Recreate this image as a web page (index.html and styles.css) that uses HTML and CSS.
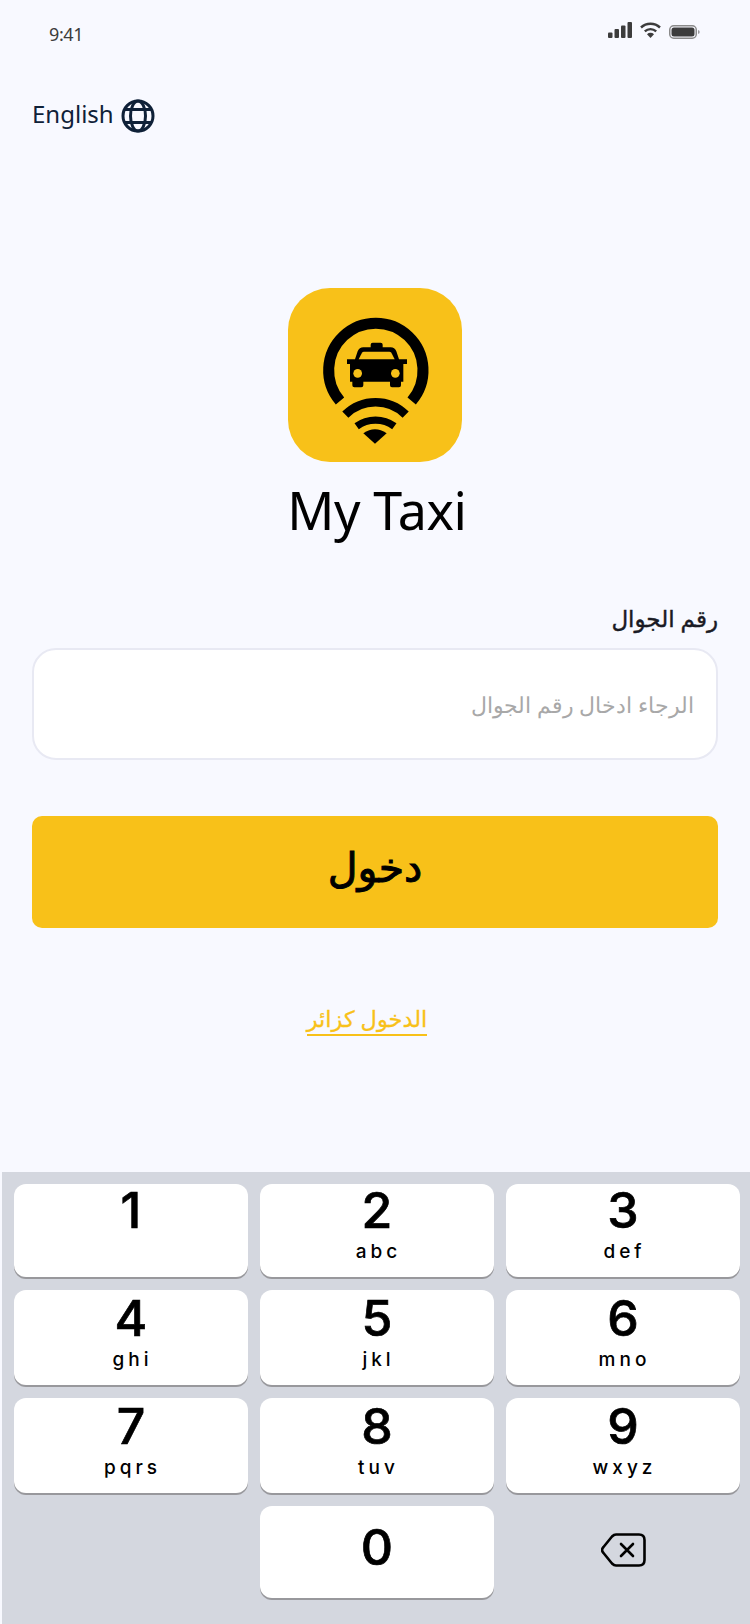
FILE: index.html
```html
<!DOCTYPE html>
<html lang="ar">
  <head>
    <meta charset="UTF-8" />
    <meta name="viewport" content="width=device-width, initial-scale=1.0" />
    <title>My Taxi</title>
    <link rel="stylesheet" href="styles.css">
  </head>

  <body>
    <div class="page">
      <div class="status-bar">
        <span class="time">9:41</span>
        <div class="status-icons">
          <svg width="24" height="16" viewBox="0 0 24 16">
            <rect x="0" y="10.500" width="4.500" height="5.500" rx="1" />
            <rect x="6.500" y="7" width="4.500" height="9" rx="1" />
            <rect x="13" y="3.500" width="4.500" height="12.500" rx="1" />
            <rect x="19.500" y="0" width="4.500" height="16" rx="1" />
          </svg>
          <svg width="21" height="16" viewBox="0 0 21 16">
            <path d="M1 5.500a14 14 0 0 1 19 0" fill="none" stroke="#3c3c3c" stroke-width="2.400" />
            <path d="M4.800 9.300a8.500 8.500 0 0 1 11.400 0" fill="none" stroke="#3c3c3c" stroke-width="2.400" />
            <path d="M7 12.200a5 5 0 0 1 7 0L10.500 16z" />
          </svg>
          <svg class="battery" width="31" height="14" viewBox="0 0 31 14">
            <rect x="0.750" y="0.750" width="26.500" height="12.500" rx="4" fill="none" stroke="#8a8a8a" stroke-width="1.500" />
            <rect x="2.500" y="2.500" width="23" height="9" rx="2.500" />
            <path d="M29.500 5c1.200.5 1.200 3.500 0 4z" />
          </svg>
        </div>
      </div>

      <div class="lang">
        <span>English</span>
        <svg width="34" height="34" viewBox="0 0 34 34" fill="none" stroke="#0f2138" stroke-width="3">
          <circle cx="17" cy="17" r="15" />
          <ellipse cx="17" cy="17" rx="7.500" ry="15" />
          <path d="M4 10.500h26M4 23.500h26" />
        </svg>
      </div>

      <div class="brand">
        <div class="logo">
          <svg width="174" height="174" viewBox="54 54 522 522">
            <path d="M210 393A141.500 141.500 0 1 1 425 393" fill="none" stroke="#000" stroke-width="33" />
            <path d="M226 434A128 128 0 0 1 407 434" fill="none" stroke="#000" stroke-width="26" />
            <path d="M260 469A96 96 0 0 1 373 469" fill="none" stroke="#000" stroke-width="22" />
            <path d="M280 490Q315 466 350 490L315 521Z" />
            <path d="M302 232V224Q302 218 308 218H332Q338 218 338 224V232H362Q374 232 379 244L387 268H411V282H400V335H393V346Q393 352 387 352H366Q360 352 360 346V335H280V346Q280 352 274 352H253Q247 352 247 346V335H240V282H231V268H255L263 244Q268 232 280 232Z" />
            <path d="M266 268L276 248Q278 245 282 245H358Q362 245 364 248L374 268Z" fill="#f8c119" />
            <circle cx="263" cy="310" r="13" fill="#f8c119" />
            <circle cx="376" cy="310" r="13" fill="#f8c119" />
          </svg>
        </div>
        <h1>My Taxi</h1>
      </div>

      <form class="login-form" dir="rtl">
        <label for="phone">رقم الجوال</label>
        <input type="tel" id="phone" dir="rtl" placeholder="الرجاء ادخال رقم الجوال" />
        <button type="button">دخول</button>
        <a href="#" class="guest">الدخول كزائر</a>
      </form>

      <div class="keyboard">
        <div class="key"><b>1</b></div>
        <div class="key"><b>2</b><small>abc</small></div>
        <div class="key"><b>3</b><small>def</small></div>
        <div class="key key-low"><b>4</b><small>ghi</small></div>
        <div class="key key-low"><b>5</b><small>jkl</small></div>
        <div class="key key-low"><b>6</b><small>mno</small></div>
        <div class="key key-low"><b>7</b><small>pqrs</small></div>
        <div class="key key-low"><b>8</b><small>tuv</small></div>
        <div class="key key-low"><b>9</b><small>wxyz</small></div>
        <div class="key-empty"></div>
        <div class="key key-zero"><b>0</b></div>
        <div class="key-empty">
          <svg width="45" height="34" viewBox="0 0 45 34" fill="none" stroke="#000" stroke-width="2.600" stroke-linejoin="round" stroke-linecap="round">
            <path d="M15 1.500h23q5.500 0 5.500 5.500v20q0 5.500-5.500 5.500H15q-2 0-4-2L2.500 20q-3-3 0-6L11 3.500q2-2 4-2z" />
            <path d="M20 11l12 12M32 11L20 23" />
          </svg>
        </div>
      </div>
    </div>
  </body>
</html>
```

FILE: styles.css
```css
* {
  box-sizing: border-box;
}

body {
  margin: 0;
  padding: 0;
  font-family: "Noto Sans", "DejaVu Sans", sans-serif;
  background-color: #f8f9ff;
}

.page {
  display: flex;
  flex-direction: column;
  width: 750px;
  height: 1624px;
  overflow: hidden;
}

.status-bar {
  display: flex;
  justify-content: space-between;
  align-items: flex-start;
  height: 99px;
  padding: 22px 50px 0 49px;
}

.time {
  font-size: 18px;
  letter-spacing: -0.4px;
  color: #3c3c3c;
}

.status-icons {
  display: flex;
  gap: 8px;
  fill: #3c3c3c;
}

.battery {
  margin-top: 3px;
}

.lang {
  display: flex;
  align-items: center;
  gap: 7px;
  height: 34px;
  padding-left: 32px;
  font-size: 24px;
  line-height: 28px;
  color: #0f2138;
}

.lang span {
  margin-bottom: 5px;
}

.brand {
  display: flex;
  flex-direction: column;
  align-items: center;
  margin-top: 155px;
}

.logo {
  width: 174px;
  height: 174px;
  border-radius: 42px;
  background-color: #f8c119;
}

.brand h1 {
  margin: 10px 0 0;
  padding-left: 4px;
  font-size: 52px;
  line-height: 76px;
  font-weight: 400;
  letter-spacing: -0.4px;
  color: #000;
}

.login-form {
  display: flex;
  flex-direction: column;
  margin-top: 54px;
  padding: 0 32px;
}

.login-form label {
  height: 46px;
  font-size: 23px;
  font-weight: 400;
  -webkit-text-stroke: 0.4px #1a1a24;
  color: #1a1a24;
}

.login-form input {
  width: 100%;
  height: 112px;
  padding: 0 22px;
  border: 2px solid #e8e9f3;
  border-radius: 24px;
  background-color: #fff;
  font-family: inherit;
  font-size: 22px;
  font-weight: 300;
  text-align: right;
}

.login-form input::placeholder {
  color: #a8a8a8;
}

.login-form button {
  height: 112px;
  margin-top: 56px;
  padding-bottom: 14px;
  border: none;
  border-radius: 10px;
  background-color: #f8c119;
  color: #000;
  font-family: inherit;
  font-size: 41px;
  font-weight: 400;
  -webkit-text-stroke: 1px #000;
}

.guest {
  align-self: center;
  margin-top: 76px;
  margin-right: 16px;
  border-bottom: 2px solid #f8c119;
  color: #f8c119;
  font-size: 22.500px;
  font-weight: 400;
  -webkit-text-stroke: 0.3px #f8c119;
  line-height: 30px;
  text-decoration: none;
}

.keyboard {
  display: grid;
  grid-template-columns: repeat(3, 234px);
  grid-template-rows: 93px 95px 95px 92px;
  gap: 13px 12px;
  height: 452px;
  margin: auto 0 0 2px;
  padding: 12px 12px 0;
  background-color: #d4d7df;
}

.key {
  display: flex;
  flex-direction: column;
  align-items: center;
  border-radius: 12px;
  background-color: #fff;
  box-shadow: 0 2px 0 #98989c;
  color: #000;
  font-family: Inter, "Liberation Sans", sans-serif;
}

.key-low {
  padding-top: 2px;
}

.key b {
  margin-top: 1px;
  font-size: 50px;
  line-height: 50px;
  font-weight: 500;
  -webkit-text-stroke: 0.7px #000;
}

.key small {
  margin-top: 6px;
  padding-left: 3px;
  font-size: 19px;
  line-height: 22px;
  font-weight: 500;
  letter-spacing: 4px;
}

.key-zero {
  justify-content: center;
  padding-bottom: 12px;
}

.key-empty {
  display: flex;
  justify-content: center;
  align-items: center;
  padding-bottom: 4px;
}
```
